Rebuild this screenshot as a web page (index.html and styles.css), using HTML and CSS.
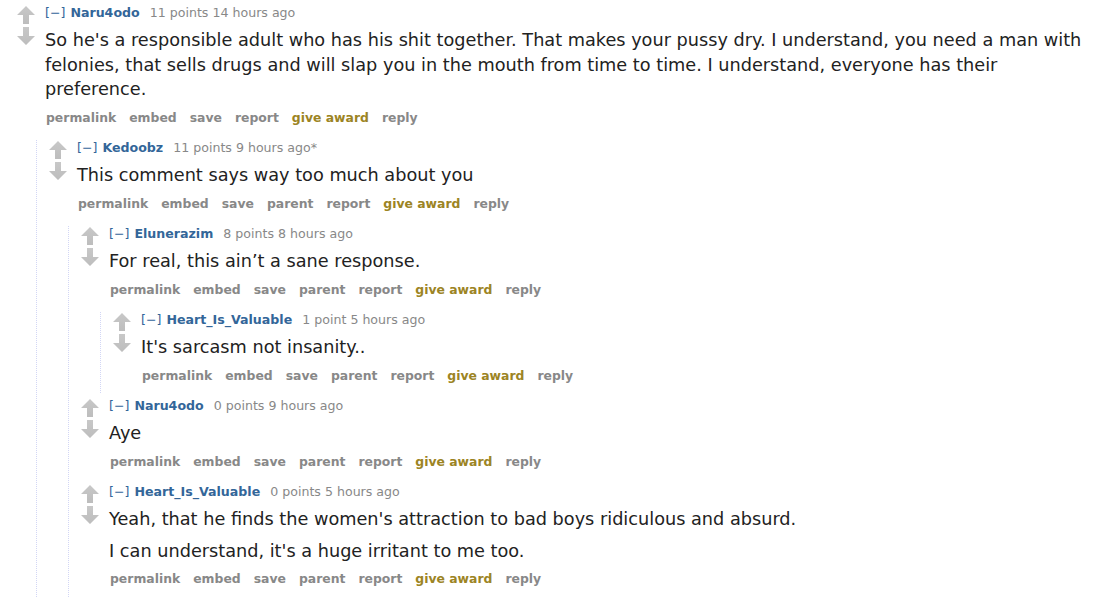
FILE: index.html
```html
<!DOCTYPE html>
<html lang="en">
  <head>
    <meta charset="UTF-8" />
    <meta name="viewport" content="width=device-width, initial-scale=1.0" />
    <title>Comments</title>
    <link rel="stylesheet" href="styles.css">
  </head>
  <body>
    <svg width="0" height="0" class="defs">
      <defs>
        <linearGradient id="arrowFill" x1="0" y1="0" x2="0" y2="1">
          <stop offset="0" stop-color="#c8c8c8" />
          <stop offset="1" stop-color="#bdbdbd" />
        </linearGradient>
        <symbol id="up" viewBox="0 0 18 18">
          <polygon points="9,0 18,9 12,9 12,18 6,18 6,9 0,9" fill="url(#arrowFill)" />
        </symbol>
        <symbol id="down" viewBox="0 0 18 18">
          <polygon points="6,0 12,0 12,9 18,9 9,18 0,9 6,9" fill="url(#arrowFill)" />
        </symbol>
      </defs>
    </svg>

    <div class="comments">
      <div class="comment">
        <div class="row">
          <div class="midcol">
            <svg class="arrow"><use href="#up" /></svg>
            <svg class="arrow"><use href="#down" /></svg>
          </div>
          <div class="entry">
            <p class="tagline"><a class="expand">[&minus;]</a> <a class="author">Naru4odo</a> <span class="score">11 points</span> <time>14 hours ago</time></p>
            <div class="md">
              <p>So he's a responsible adult who has his shit together. That makes your pussy dry. I understand, you need a man with felonies, that sells drugs and will slap you in the mouth from time to time. I understand, everyone has their preference.</p>
            </div>
            <ul class="buttons">
              <li>permalink</li><li>embed</li><li>save</li><li>report</li><li class="award">give award</li><li>reply</li>
            </ul>
          </div>
        </div>

        <div class="child">
          <div class="comment">
            <div class="row">
              <div class="midcol">
                <svg class="arrow"><use href="#up" /></svg>
                <svg class="arrow"><use href="#down" /></svg>
              </div>
              <div class="entry">
                <p class="tagline"><a class="expand">[&minus;]</a> <a class="author">Kedoobz</a> <span class="score">11 points</span> <time>9 hours ago</time><span class="edited">*</span></p>
                <div class="md">
                  <p>This comment says way too much about you</p>
                </div>
                <ul class="buttons">
                  <li>permalink</li><li>embed</li><li>save</li><li>parent</li><li>report</li><li class="award">give award</li><li>reply</li>
                </ul>
              </div>
            </div>

            <div class="child">
              <div class="comment">
                <div class="row">
                  <div class="midcol">
                    <svg class="arrow"><use href="#up" /></svg>
                    <svg class="arrow"><use href="#down" /></svg>
                  </div>
                  <div class="entry">
                    <p class="tagline"><a class="expand">[&minus;]</a> <a class="author">Elunerazim</a> <span class="score">8 points</span> <time>8 hours ago</time></p>
                    <div class="md">
                      <p>For real, this ain’t a sane response.</p>
                    </div>
                    <ul class="buttons">
                      <li>permalink</li><li>embed</li><li>save</li><li>parent</li><li>report</li><li class="award">give award</li><li>reply</li>
                    </ul>
                  </div>
                </div>

                <div class="child">
                  <div class="comment">
                    <div class="row">
                      <div class="midcol">
                        <svg class="arrow"><use href="#up" /></svg>
                        <svg class="arrow"><use href="#down" /></svg>
                      </div>
                      <div class="entry">
                        <p class="tagline"><a class="expand">[&minus;]</a> <a class="author">Heart_Is_Valuable</a> <span class="score">1 point</span> <time>5 hours ago</time></p>
                        <div class="md">
                          <p>It's sarcasm not insanity..</p>
                        </div>
                        <ul class="buttons">
                          <li>permalink</li><li>embed</li><li>save</li><li>parent</li><li>report</li><li class="award">give award</li><li>reply</li>
                        </ul>
                      </div>
                    </div>
                  </div>
                </div>
              </div>

              <div class="comment">
                <div class="row">
                  <div class="midcol">
                    <svg class="arrow"><use href="#up" /></svg>
                    <svg class="arrow"><use href="#down" /></svg>
                  </div>
                  <div class="entry">
                    <p class="tagline"><a class="expand">[&minus;]</a> <a class="author">Naru4odo</a> <span class="score">0 points</span> <time>9 hours ago</time></p>
                    <div class="md">
                      <p>Aye</p>
                    </div>
                    <ul class="buttons">
                      <li>permalink</li><li>embed</li><li>save</li><li>parent</li><li>report</li><li class="award">give award</li><li>reply</li>
                    </ul>
                  </div>
                </div>
              </div>

              <div class="comment">
                <div class="row">
                  <div class="midcol">
                    <svg class="arrow"><use href="#up" /></svg>
                    <svg class="arrow"><use href="#down" /></svg>
                  </div>
                  <div class="entry">
                    <p class="tagline"><a class="expand">[&minus;]</a> <a class="author">Heart_Is_Valuable</a> <span class="score">0 points</span> <time>5 hours ago</time></p>
                    <div class="md">
                      <p>Yeah, that he finds the women's attraction to bad boys ridiculous and absurd.</p>
                      <p>I can understand, it's a huge irritant to me too.</p>
                    </div>
                    <ul class="buttons">
                      <li>permalink</li><li>embed</li><li>save</li><li>parent</li><li>report</li><li class="award">give award</li><li>reply</li>
                    </ul>
                  </div>
                </div>
              </div>
            </div>
          </div>
        </div>
      </div>
    </div>
  </body>
</html>
```

FILE: styles.css
```css
body {
  margin: 0;
  background: #fff;
  font-family: "DejaVu Sans", Verdana, sans-serif;
  color: #222;
  overflow: hidden;
}

.defs {
  position: absolute;
}

.comments {
  padding: 5px 8px 0 8px;
}

.comment + .comment {
  margin-top: 5px;
}

.row {
  display: flex;
  padding-bottom: 9.6px;
}

.midcol {
  display: flex;
  flex-direction: column;
  gap: 3px;
  width: 18px;
  margin: 1px 10px 0 9px;
  flex-shrink: 0;
}

.arrow {
  width: 18px;
  height: 18px;
  display: block;
}

.entry {
  flex: 1;
  min-width: 0;
}

.tagline {
  margin: 0;
  font-size: 12.6px;
  line-height: 16px;
  color: #888;
  white-space: nowrap;
}

.expand {
  color: #369;
  margin-right: 1px;
}

.author {
  color: #369;
  font-weight: bold;
  margin-right: 6px;
}

.edited {
  color: #888;
}

.md {
  font-size: 17.7px;
  line-height: 24.5px;
  color: #222;
  max-width: 1045px;
}

.md p {
  margin: 7px 0 6px;
}

.buttons {
  list-style: none;
  margin: 0;
  padding: 2px 0 0 1px;
  display: flex;
  gap: 13px;
  font-size: 12.4px;
  line-height: 16px;
  font-weight: bold;
  color: #888;
}

.buttons .award {
  color: #9c8424;
}

.child {
  margin: 5px 0 0 28px;
  padding-left: 3px;
  border-left: 1px dotted #d2d6f5;
}
```
